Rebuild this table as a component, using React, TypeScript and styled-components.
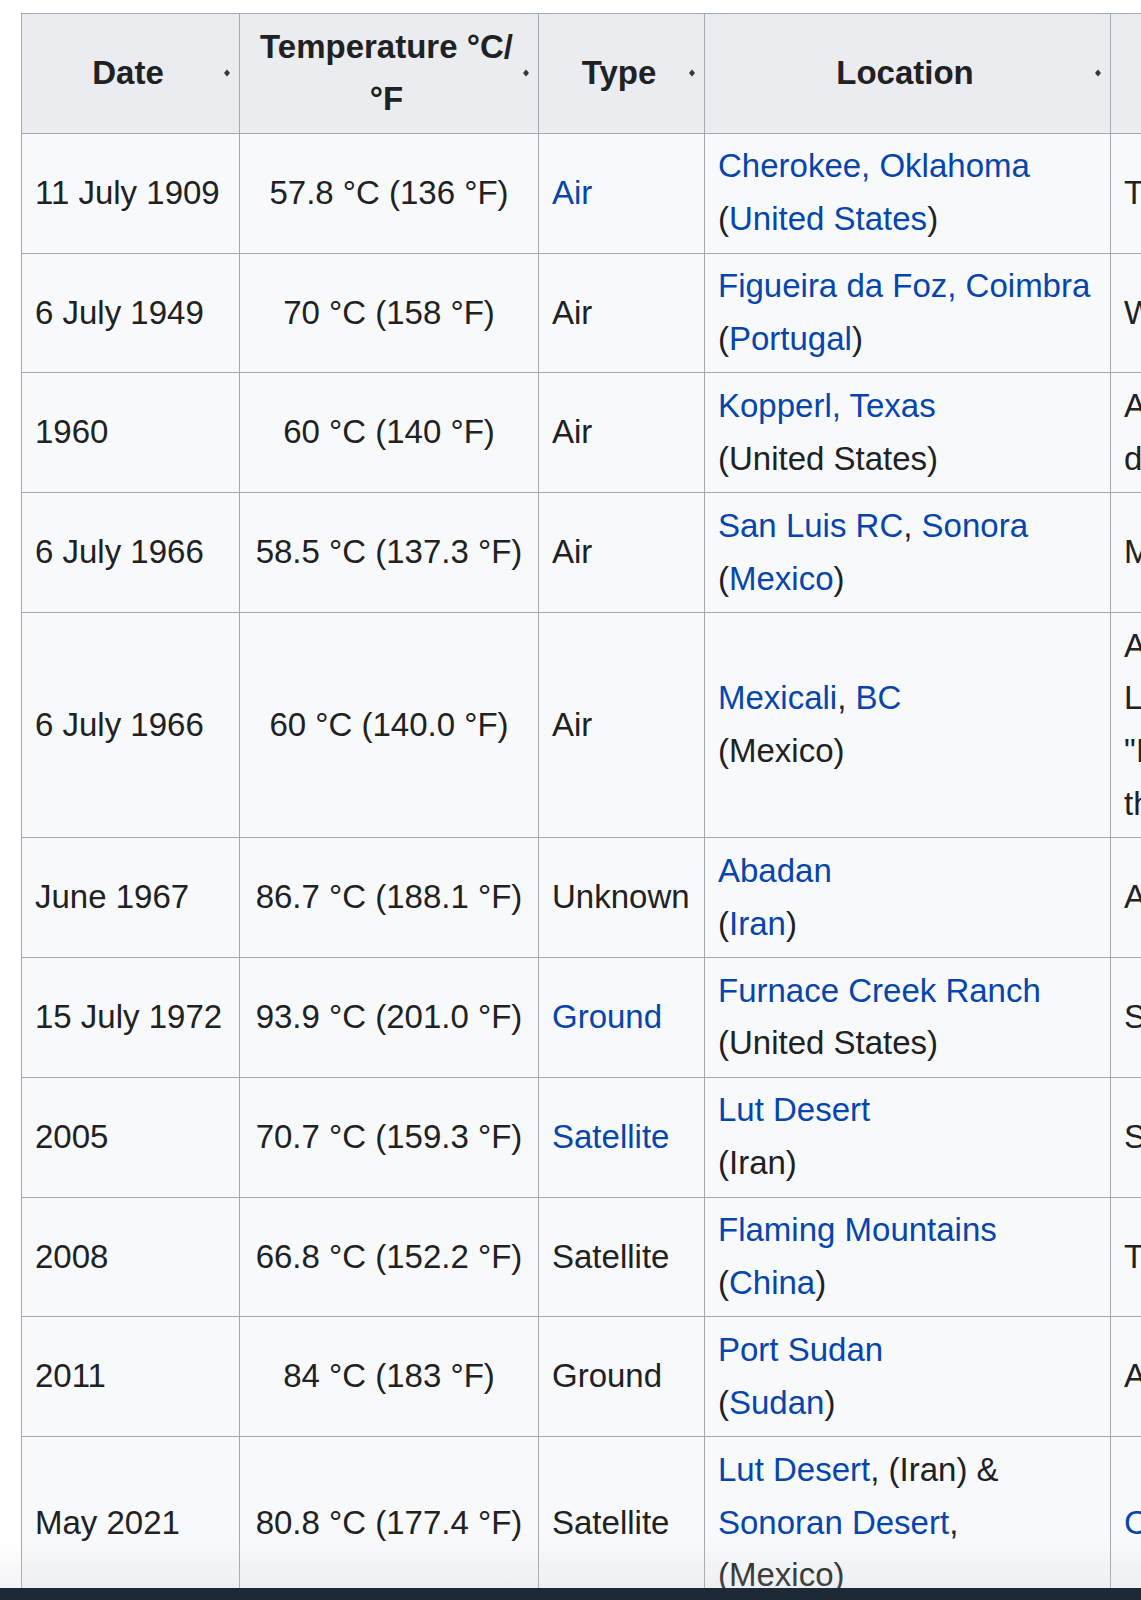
import { Fragment } from "react";
import styled, { createGlobalStyle } from "styled-components";

const GlobalStyle = createGlobalStyle`
  html, body {
    margin: 0;
    padding: 0;
    background: #ffffff;
    overflow: hidden;
  }
  body {
    font-family: "Liberation Sans", Arial, Helvetica, sans-serif;
    color: #202122;
  }
`;

const Page = styled.div`
  padding: 13px 0 0 21px;
  width: 1700px;
`;

const Table = styled.table`
  border-collapse: collapse;
  table-layout: fixed;
  width: 1618px;
  border: 1px solid #a2a9b1;
  background: #f8f9fa;
  font-size: 33px;
  line-height: 1.6;
  color: #202122;
`;

const HeadCell = styled.th`
  position: relative;
  background: #eaecf0;
  border: 1px solid #a2a9b1;
  padding: 6.6px 18px 6.6px 13px;
  font-weight: bold;
  text-align: center;
  vertical-align: middle;
`;

const SortIcon = styled.svg`
  position: absolute;
  right: 8px;
  top: 50%;
  margin-top: -5px;
  width: 8px;
  height: 10px;
`;

const Cell = styled.td<{ $align?: "left" | "center" }>`
  border: 1px solid #a2a9b1;
  padding: 6.6px 13px;
  text-align: ${(p) => p.$align ?? "left"};
  vertical-align: middle;
  white-space: nowrap;
`;

const Link = styled.a`
  color: #0645ad;
  text-decoration: none;
`;

const BottomShade = styled.div`
  position: fixed;
  left: 0;
  right: 0;
  bottom: 12px;
  height: 48px;
  background: linear-gradient(to bottom, rgba(200, 205, 212, 0), rgba(200, 205, 212, 0.22));
  pointer-events: none;
`;

const BottomBar = styled.div`
  position: fixed;
  left: 0;
  right: 0;
  bottom: 0;
  height: 12px;
  background: #1d2a35;
`;

const Sort = () => (
  <SortIcon viewBox="0 0 8 10">
    <path d="M4 1.5 L7 5 L4 8.5 L1 5 Z" fill="#33373a" />
  </SortIcon>
);

type Row = {
  date: string;
  temp: string;
  type: React.ReactNode;
  location: React.ReactNode;
  notes: React.ReactNode;
};

const rows: Row[] = [
  {
    date: "11 July 1909",
    temp: "57.8 °C (136 °F)",
    type: <Link>Air</Link>,
    location: (
      <>
        <Link>Cherokee, Oklahoma</Link>
        <br />(<Link>United States</Link>)
      </>
    ),
    notes: "The reading was later deemed unreliable by the weather service",
  },
  {
    date: "6 July 1949",
    temp: "70 °C (158 °F)",
    type: "Air",
    location: (
      <>
        <Link>Figueira da Foz, Coimbra</Link>
        <br />(<Link>Portugal</Link>)
      </>
    ),
    notes: "Winds from the interior raised the temperature in minutes",
  },
  {
    date: "1960",
    temp: "60 °C (140 °F)",
    type: "Air",
    location: (
      <>
        <Link>Kopperl, Texas</Link>
        <br />
        (United States)
      </>
    ),
    notes: (
      <>
        Attributed to a heat burst,
        <br />
        during a thunderstorm at night
      </>
    ),
  },
  {
    date: "6 July 1966",
    temp: "58.5 °C (137.3 °F)",
    type: "Air",
    location: (
      <>
        <Link>San Luis RC</Link>, <Link>Sonora</Link>
        <br />(<Link>Mexico</Link>)
      </>
    ),
    notes: "Measured by a local station, not officially confirmed",
  },
  {
    date: "6 July 1966",
    temp: "60 °C (140.0 °F)",
    type: "Air",
    location: (
      <>
        <Link>Mexicali</Link>, <Link>BC</Link>
        <br />
        (Mexico)
      </>
    ),
    notes: (
      <>
        Appears in a list of
        <br />
        Latin American records as
        <br />
        "Inofficial", reported by
        <br />
        the local newspaper
      </>
    ),
  },
  {
    date: "June 1967",
    temp: "86.7 °C (188.1 °F)",
    type: "Unknown",
    location: (
      <>
        <Link>Abadan</Link>
        <br />(<Link>Iran</Link>)
      </>
    ),
    notes: "Apocryphal report during a heat wave",
  },
  {
    date: "15 July 1972",
    temp: "93.9 °C (201.0 °F)",
    type: <Link>Ground</Link>,
    location: (
      <>
        <Link>Furnace Creek Ranch</Link>
        <br />
        (United States)
      </>
    ),
    notes: "Surface temperature of the ground",
  },
  {
    date: "2005",
    temp: "70.7 °C (159.3 °F)",
    type: <Link>Satellite</Link>,
    location: (
      <>
        <Link>Lut Desert</Link>
        <br />
        (Iran)
      </>
    ),
    notes: "Surface temperature measured from orbit",
  },
  {
    date: "2008",
    temp: "66.8 °C (152.2 °F)",
    type: "Satellite",
    location: (
      <>
        <Link>Flaming Mountains</Link>
        <br />(<Link>China</Link>)
      </>
    ),
    notes: "The hottest place in China by surface reading",
  },
  {
    date: "2011",
    temp: "84 °C (183 °F)",
    type: "Ground",
    location: (
      <>
        <Link>Port Sudan</Link>
        <br />(<Link>Sudan</Link>)
      </>
    ),
    notes: "Asphalt surface in the port area",
  },
  {
    date: "May 2021",
    temp: "80.8 °C (177.4 °F)",
    type: "Satellite",
    location: (
      <>
        <Link>Lut Desert</Link>, (Iran) &amp;
        <br />
        <Link>Sonoran Desert</Link>,
        <br />
        (Mexico)
      </>
    ),
    notes: <Link>Copernicus land surface data</Link>,
  },
];

export default function App() {
  return (
    <>
      <GlobalStyle />
      <Page>
        <Table>
          <colgroup>
            <col style={{ width: 218 }} />
            <col style={{ width: 299 }} />
            <col style={{ width: 166 }} />
            <col style={{ width: 406 }} />
            <col style={{ width: 529 }} />
          </colgroup>
          <thead>
            <tr>
              <HeadCell>
                Date
                <Sort />
              </HeadCell>
              <HeadCell>
                Temperature °C/
                <br />
                °F
                <Sort />
              </HeadCell>
              <HeadCell>
                Type
                <Sort />
              </HeadCell>
              <HeadCell>
                Location
                <Sort />
              </HeadCell>
              <HeadCell>
                Notes
                <Sort />
              </HeadCell>
            </tr>
          </thead>
          <tbody>
            {rows.map((r, i) => (
              <Fragment key={i}>
                <tr>
                  <Cell>{r.date}</Cell>
                  <Cell $align="center">{r.temp}</Cell>
                  <Cell>{r.type}</Cell>
                  <Cell>{r.location}</Cell>
                  <Cell>{r.notes}</Cell>
                </tr>
              </Fragment>
            ))}
          </tbody>
        </Table>
      </Page>
      <BottomShade />
      <BottomBar />
    </>
  );
}
